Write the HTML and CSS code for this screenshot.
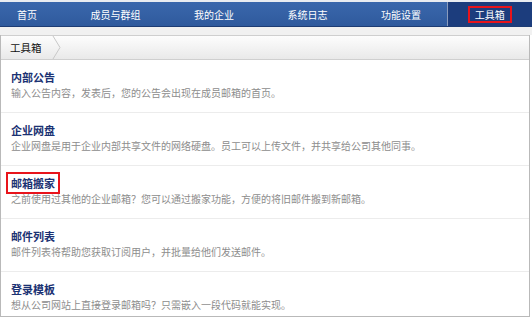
FILE: index.html
```html
<!DOCTYPE html>
<html lang="zh-CN">
<head>
    <meta charset="UTF-8">
    <meta name="viewport" content="width=device-width, initial-scale=1.0">
    <title>工具箱</title>
    <link rel="stylesheet" href="styles.css">
</head>
<body>
    <div class="nav">
        <ul>
            <li><a href="#">首页</a></li>
            <li><a href="#">成员与群组</a></li>
            <li><a href="#">我的企业</a></li>
            <li><a href="#">系统日志</a></li>
            <li><a href="#">功能设置</a></li>
            <li class="active"><a href="#"><span class="mark">工具箱</span></a></li>
        </ul>
    </div>
    <div class="band"></div>
    <div class="panel">
        <div class="crumb">
            <span class="crumb-item">工具箱</span>
            <svg class="chev" width="10" height="23" viewBox="0 0 10 23">
                <polyline points="1,0 8,11.5 1,23" fill="none" stroke="#c8c8c8" stroke-width="1"/>
            </svg>
        </div>
        <ul class="tools">
            <li>
                <h3><a href="#">内部公告</a></h3>
                <p>输入公告内容，发表后，您的公告会出现在成员邮箱的首页。</p>
            </li>
            <li>
                <h3><a href="#">企业网盘</a></h3>
                <p>企业网盘是用于企业内部共享文件的网络硬盘。员工可以上传文件，并共享给公司其他同事。</p>
            </li>
            <li>
                <h3><a href="#" class="mark">邮箱搬家</a></h3>
                <p>之前使用过其他的企业邮箱？您可以通过搬家功能，方便的将旧邮件搬到新邮箱。</p>
            </li>
            <li>
                <h3><a href="#">邮件列表</a></h3>
                <p>邮件列表将帮助您获取订阅用户，并批量给他们发送邮件。</p>
            </li>
            <li>
                <h3><a href="#">登录模板</a></h3>
                <p>想从公司网站上直接登录邮箱吗？只需嵌入一段代码就能实现。</p>
            </li>
        </ul>
    </div>
</body>
</html>
```

FILE: styles.css
```css
body {
    margin: 0;
    font-family: "Noto Sans CJK SC", "Liberation Sans", sans-serif;
    font-size: 10px;
    background: #fff;
}
ul {
    list-style: none;
    margin: 0;
    padding: 0;
}
a {
    text-decoration: none;
}
.nav {
    border-top: 2px solid #e9ecf1;
    background: linear-gradient(#3a67ac, #2f5a9d);
    border-bottom: 1px solid #1d3c74;
    height: 24px;
}
.nav ul {
    display: flex;
    height: 100%;
    padding-left: 17px;
}
.nav li {
    display: flex;
}
.nav li a {
    display: flex;
    align-items: center;
    padding: 0 26.75px;
    color: #fff;
    font-size: 10px;
}
.nav li:first-child a {
    padding-left: 0;
}
.nav li.active {
    flex: 1;
    background: #1c3d7d;
    border-left: 1px solid #8a9cbd;
    margin-left: -1px;
}
.nav li.active a {
    padding-left: 27px;
}
.nav .mark {
    line-height: 13px;
    padding: 0 5px;
    margin: 0 -7px;
}
.mark {
    border: 2px solid #e8141b;
}
.band {
    height: 8px;
    background: #f1f1f1;
}
.panel {
    width: 528px;
    border: 1px solid #b9b9b9;
    border-top: none;
}
.crumb {
    display: flex;
    align-items: center;
    height: 23px;
    border-top: 1px solid #cfcfcf;
    border-bottom: 1px solid #cfcfcf;
    background: linear-gradient(#fdfdfd, #e9e9e9);
}
.crumb-item {
    padding: 0 10px 0 9px;
    font-size: 10.5px;
    color: #111;
}
.chev {
    display: block;
}
.tools li {
    padding: 9px 10px 11px;
    border-bottom: 1px solid #ececec;
}
.tools li:last-child {
    border-bottom: none;
    padding-bottom: 3px;
}
.tools h3 {
    margin: 0;
    font-size: 11px;
    line-height: 16px;
    font-weight: bold;
}
.tools h3 a {
    color: #1b3273;
}
.tools h3 a.mark {
    padding: 1px 3px;
    margin-left: -5px;
}
.tools p {
    margin: 0;
    font-size: 10px;
    line-height: 16px;
    color: #8d8d8d;
}
```
